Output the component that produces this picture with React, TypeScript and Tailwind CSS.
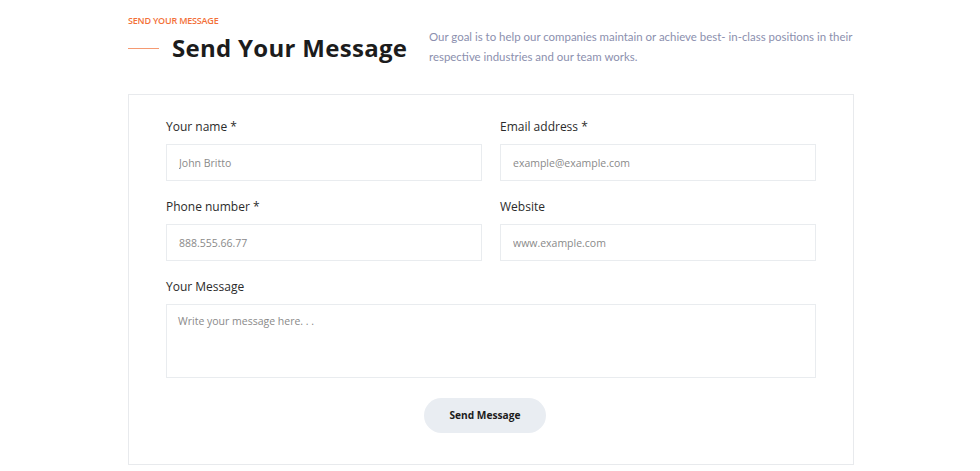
import React from "react";

const font = { fontFamily: '"Open Sans", "Liberation Sans", sans-serif' };

function Field({ label, placeholder }: { label: string; placeholder: string }) {
  return (
    <div className="flex flex-col">
      <label className="text-[12px] leading-[20px] text-[#2b2b2b] mb-[7px]">{label}</label>
      <input
        placeholder={placeholder}
        className="h-[37px] w-full border border-[#e9ecef] bg-white px-[12px] text-[10.5px] text-[#555] placeholder:text-[#8a8a8a] outline-none"
      />
    </div>
  );
}

export default function App() {
  return (
    <div className="min-h-[471px] w-full bg-white" style={font}>
      <div className="ml-[128px] w-[726px] pt-[14px]">
        <div className="flex">
          <div className="w-[301px] shrink-0">
            <div className="text-[9px] font-semibold leading-[14px] text-[#f36f38] tracking-[-0.2px]">SEND YOUR MESSAGE</div>
            <div className="mt-[5px] flex items-center">
              <div className="h-px w-[31px] bg-[#f59a72]" />
              <h2 className="ml-[13px] text-[24px] font-bold leading-[30px] text-[#1c1c1c] tracking-[0.3px] whitespace-nowrap">Send Your Message</h2>
            </div>
          </div>
          <p
            className="pt-[13px] text-[11.45px] leading-[20px] text-[#8b8fae] whitespace-nowrap"
            style={{ fontFamily: 'Lato, "Liberation Sans", sans-serif' }}
          >
            Our goal is to help our companies maintain or achieve best- in-class positions in their
            <br />
            respective industries and our team works.
          </p>
        </div>
        <div className="mt-[27px] border border-[#e8eaed] px-[37px] pt-[22px] pb-[31px]">
          <div className="grid grid-cols-2 gap-x-[18px] gap-y-[16px]">
            <Field label="Your name *" placeholder="John Britto" />
            <Field label="Email address *" placeholder="example@example.com" />
            <Field label="Phone number *" placeholder="888.555.66.77" />
            <Field label="Website" placeholder="www.example.com" />
            <div className="col-span-2 flex flex-col">
              <label className="text-[12px] leading-[20px] text-[#2b2b2b] mb-[7px]">Your Message</label>
              <textarea
                placeholder="Write your message here. . ."
                className="h-[74px] w-full resize-none border border-[#e9ecef] bg-white px-[11px] py-[9px] text-[10.5px] text-[#555] placeholder:text-[#8a8a8a] outline-none"
              />
            </div>
          </div>
          <div className="mt-[20px] flex justify-center pr-[12px]">
            <button className="h-[35px] w-[122px] rounded-full bg-[#e9edf2] text-[10.2px] font-bold text-[#1c1c1c]">
              Send Message
            </button>
          </div>
        </div>
      </div>
    </div>
  );
}
